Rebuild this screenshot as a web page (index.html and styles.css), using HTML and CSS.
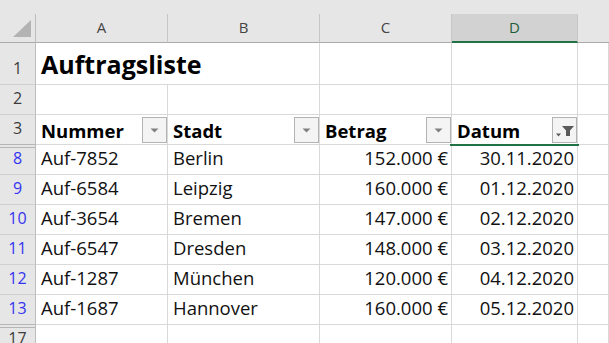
FILE: index.html
```html
<!DOCTYPE html>
<html lang="de">
<head>
<meta charset="utf-8">
<title>Auftragsliste</title>
<link rel="stylesheet" href="styles.css">
</head>
<body>
<div class="sheet">
  <div class="strip"></div>

  <div class="corner"><svg class="tri" width="20" height="18" viewBox="0 0 20 18"><polygon points="19,0 19,17 1,17" fill="#b3b3b3"/></svg></div>
  <div class="ch">A</div>
  <div class="ch">B</div>
  <div class="ch">C</div>
  <div class="ch sel">D</div>
  <div class="ch last"></div>

  <div class="rh">1</div>
  <div class="c title span2">Auftragsliste</div>
  <div class="c"></div>
  <div class="c"></div>
  <div class="c"></div>

  <div class="rh">2</div>
  <div class="c"></div>
  <div class="c"></div>
  <div class="c"></div>
  <div class="c"></div>
  <div class="c"></div>

  <div class="rh hid">3</div>
  <div class="c hd"><span>Nummer</span><span class="fb"><svg width="23" height="24" viewBox="0 0 23 24"><polygon points="7.5,10.5 15.5,10.5 11.5,14.5" fill="#808080"/></svg></span></div>
  <div class="c hd"><span>Stadt</span><span class="fb"><svg width="23" height="24" viewBox="0 0 23 24"><polygon points="7.5,10.5 15.5,10.5 11.5,14.5" fill="#808080"/></svg></span></div>
  <div class="c hd"><span>Betrag</span><span class="fb"><svg width="23" height="24" viewBox="0 0 23 24"><polygon points="7.5,10.5 15.5,10.5 11.5,14.5" fill="#808080"/></svg></span></div>
  <div class="c hd active"><span>Datum</span><span class="fb"><svg width="23" height="24" viewBox="0 0 23 24"><polygon points="9,8 21,8 17,12.5 17,18 13,18 13,12.5" fill="#5a5a5a"/><polygon points="3,15.5 8,15.5 5.5,18.5" fill="#5a5a5a"/></svg></span></div>
  <div class="c"></div>

  <div class="rh f gap">8</div>
  <div class="c">Auf-7852</div>
  <div class="c">Berlin</div>
  <div class="c r">152.000&nbsp;€</div>
  <div class="c r">30.11.2020</div>
  <div class="c"></div>

  <div class="rh f">9</div>
  <div class="c">Auf-6584</div>
  <div class="c">Leipzig</div>
  <div class="c r">160.000&nbsp;€</div>
  <div class="c r">01.12.2020</div>
  <div class="c"></div>

  <div class="rh f">10</div>
  <div class="c">Auf-3654</div>
  <div class="c">Bremen</div>
  <div class="c r">147.000&nbsp;€</div>
  <div class="c r">02.12.2020</div>
  <div class="c"></div>

  <div class="rh f">11</div>
  <div class="c">Auf-6547</div>
  <div class="c">Dresden</div>
  <div class="c r">148.000&nbsp;€</div>
  <div class="c r">03.12.2020</div>
  <div class="c"></div>

  <div class="rh f">12</div>
  <div class="c">Auf-1287</div>
  <div class="c">München</div>
  <div class="c r">120.000&nbsp;€</div>
  <div class="c r">04.12.2020</div>
  <div class="c"></div>

  <div class="rh f hid">13</div>
  <div class="c">Auf-1687</div>
  <div class="c">Hannover</div>
  <div class="c r">160.000&nbsp;€</div>
  <div class="c r">05.12.2020</div>
  <div class="c"></div>

  <div class="rh gap">17</div>
  <div class="c"></div>
  <div class="c"></div>
  <div class="c"></div>
  <div class="c"></div>
  <div class="c"></div>
</div>
</body>
</html>
```

FILE: styles.css
```css
* { box-sizing: border-box; }

html, body {
  margin: 0;
  padding: 0;
  background: #ffffff;
}

body {
  width: 609px;
  height: 343px;
  overflow: hidden;
  font-family: "Open Sans", "Noto Sans", sans-serif;
}

.sheet {
  display: grid;
  grid-template-columns: 36px 132px 152px 132px 126px 31px;
  grid-template-rows: 14px 29px 42px 30px 30px repeat(6, 30px) 30px;
}

.strip {
  grid-column: 1 / -1;
  background: #e6e6e6;
}

.corner {
  background: #e6e6e6;
  border-right: 1px solid #bdbdbd;
  border-bottom: 1px solid #ababab;
  display: flex;
  justify-content: flex-end;
  align-items: flex-end;
  padding: 0 3px 4px 0;
}

.tri { display: block; }

.ch {
  background: #e6e6e6;
  border-right: 1px solid #c6c6c6;
  border-bottom: 1px solid #ababab;
  display: flex;
  justify-content: center;
  align-items: flex-end;
  padding-bottom: 7px;
  font-size: 15px;
  line-height: 1;
  color: #444444;
}

.ch.last { border-right: none; }

.ch.sel {
  background: #d2d2d2;
  border-bottom: 2px solid #217346;
  color: #1e5f3b;
  padding-bottom: 6px;
}

.rh {
  background: #e6e6e6;
  border-right: 1px solid #bdbdbd;
  border-bottom: 1px solid #cfcfcf;
  display: flex;
  justify-content: center;
  align-items: flex-end;
  padding-bottom: 8px;
  font-size: 16px;
  line-height: 1;
  color: #3c3c3c;
}

.rh.f { color: #3434f0; }

.rh.hid { border-bottom-color: #b5b5b5; }

.rh.gap {
  box-shadow: inset 0 2px 0 #e6e6e6, inset 0 3px 0 #b5b5b5;
}

.c {
  border-right: 1px solid #d9d9d9;
  border-bottom: 1px solid #d9d9d9;
  display: flex;
  align-items: flex-end;
  padding: 0 3px 7px 5px;
  font-size: 18.5px;
  line-height: 1;
  white-space: nowrap;
  color: #111111;
}

.c.r { justify-content: flex-end; }

.span2 { grid-column: span 2; }

.title {
  font-size: 25px;
  font-weight: 700;
  padding-bottom: 7px;
  color: #000000;
}

.hd {
  align-items: center;
  padding: 3px 0 0 5px;
  font-weight: 700;
  color: #000000;
}

.fb {
  margin-left: auto;
  width: 25px;
  height: 26px;
  border: 1px solid #b3b3b3;
  background: #f4f4f4;
  display: block;
  margin-top: -3px;
}

.fb svg { display: block; }

.active { position: relative; }

.active::after {
  content: "";
  position: absolute;
  left: -2px;
  right: -2px;
  bottom: -2px;
  height: 2px;
  background: #217346;
}
```
